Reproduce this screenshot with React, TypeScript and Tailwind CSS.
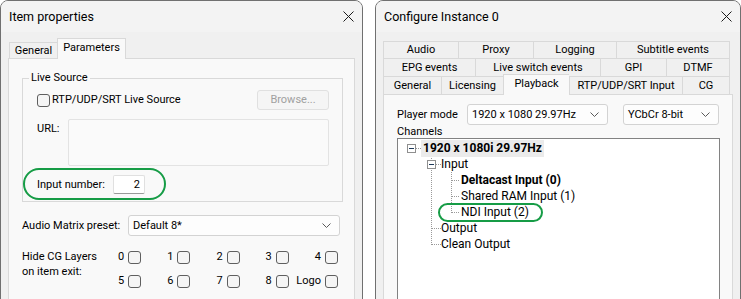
import React from 'react'

function CheckBox() {
  return <span className="inline-block w-[13px] h-[13px] rounded-[3px] border border-[#5f5f5f] bg-[#f5f5f5] shrink-0" />
}

function Chevron() {
  return (
    <svg width="9" height="5" viewBox="0 0 9 5" className="shrink-0">
      <path d="M0.5 0.5 L4.5 4.5 L8.5 0.5" fill="none" stroke="#5a5a5a" strokeWidth="1" />
    </svg>
  )
}

function CloseX() {
  return (
    <svg width="11" height="11" viewBox="0 0 11 11">
      <path d="M0.5 0.5 L10.5 10.5 M10.5 0.5 L0.5 10.5" stroke="#1b1b1b" strokeWidth="1" />
    </svg>
  )
}

function Select({ value, width }: { value: string; width: string }) {
  return (
    <div className={`${width} h-[21px] flex items-center justify-between pl-[4px] pr-[8px] bg-[#fdfdfd] border border-[#d3d3d3] rounded-[3px]`}>
      <span>{value}</span>
      <Chevron />
    </div>
  )
}

function TitleBar({ title }: { title: string }) {
  return (
    <div className="h-[31px] flex items-center justify-between pl-[8px] pr-[8px] bg-[#f3f3f3] rounded-t-[7px] text-[12.5px]">
      <span>{title}</span>
      <CloseX />
    </div>
  )
}

const layers = ['0', '1', '2', '3', '4', '5', '6', '7', '8', 'Logo']

function ItemProperties() {
  return (
    <div className="w-[363px] h-[320px] shrink-0 border border-[#707070] rounded-t-[8px] bg-[#f0f0f0] flex flex-col">
      <TitleBar title="Item properties" />
      <div className="flex-1 pt-[6px] px-[7px] flex flex-col">
        <div className="h-[20px] flex items-end pl-[1px]">
          <div className="w-[48px] h-[16px] border-t border-l border-[#d9d9d9] flex items-center justify-center">General</div>
          <div className="w-[69px] h-[21px] -mb-px relative z-10 border-t border-l border-r border-[#d9d9d9] bg-[#f9f9f9] flex items-start justify-center pt-[1px]">Parameters</div>
        </div>
        <div className="flex-1 border border-[#d9d9d9] bg-[#f9f9f9] pl-[13px]">
          <fieldset className="mt-[11px] w-[319px] border border-[#d9d9d9] pl-[14px] pr-[13px] pt-[4px] pb-[7px]">
            <legend className="-ml-[8px] px-[2px] leading-[16px]">Live Source</legend>
            <div className="h-[20px] flex items-center justify-between">
              <label className="flex items-center gap-[2px]">
                <CheckBox />
                <span>RTP/UDP/SRT Live Source</span>
              </label>
              <div className="w-[72px] h-[20px] border border-[#e0e0e0] rounded-[3px] bg-[#f5f5f5] text-[#a0a0a0] flex items-center justify-center">Browse...</div>
            </div>
            <div className="mt-[9px] flex">
              <span className="w-[31px] pt-[2px]">URL:</span>
              <div className="w-[261px] h-[47px] border border-[#e3e3e3] rounded-[2px] bg-[#fafafa]" />
            </div>
            <div className="mt-[9px] h-[19px] flex items-center">
              <span className="w-[76px]">Input number:</span>
              <div className="w-[32px] h-[19px] border border-[#e0e0e0] border-b-[#9a9a9a] rounded-[2px] bg-white flex items-center justify-end pr-[4px]">2</div>
            </div>
          </fieldset>
          <div className="mt-[13px] flex items-center">
            <span className="w-[106px]">Audio Matrix preset:</span>
            <Select value="Default 8*" width="w-[212px]" />
          </div>
          <div className="mt-[9px] flex">
            <div className="w-[70px] pt-[4px] leading-[15px]">
              Hide CG Layers
              <br />
              on item exit:
            </div>
            <div className="w-[246px] grid grid-cols-5">
              {layers.map((l) => (
                <div key={l} className="h-[24px] flex items-center justify-end gap-[4px]">
                  <span>{l}</span>
                  <CheckBox />
                </div>
              ))}
            </div>
          </div>
        </div>
      </div>
    </div>
  )
}

const tabRows = [
  [['Audio', 75], ['Proxy', 75], ['Logging', 83], ['Subtitle events', 114]],
  [['EPG events', 92], ['Live switch events', 125], ['GPI', 66], ['DTMF', 64]],
] as const

const row3 = [
  ['General', 58],
  ['Licensing', 62],
  ['Playback', 66],
  ['RTP/UDP/SRT Input', 113],
  ['CG', 48],
] as const

function TreeLines() {
  const dot = { stroke: '#9a9a9a', strokeWidth: 1, strokeDasharray: '1 1' }
  return (
    <svg className="absolute left-0 top-0" width="200" height="120" viewBox="0 0 200 120">
      {/* root */}
      <line x1="18" y1="9.5" x2="23" y2="9.5" {...dot} />
      <line x1="33.5" y1="17" x2="33.5" y2="21" {...dot} />
      <line x1="33.5" y1="31" x2="33.5" y2="106" {...dot} />
      <line x1="38" y1="25.5" x2="43" y2="25.5" {...dot} />
      <line x1="34" y1="89.5" x2="43" y2="89.5" {...dot} />
      <line x1="34" y1="105.5" x2="43" y2="105.5" {...dot} />
      {/* input children */}
      <line x1="53.5" y1="33" x2="53.5" y2="74" {...dot} />
      <line x1="54" y1="41.5" x2="62" y2="41.5" {...dot} />
      <line x1="54" y1="57.5" x2="62" y2="57.5" {...dot} />
      <line x1="54" y1="73.5" x2="62" y2="73.5" {...dot} />
      {/* expand boxes */}
      <rect x="9.5" y="5.5" width="8" height="8" fill="#fff" stroke="#8f8f8f" />
      <line x1="11" y1="9.5" x2="16" y2="9.5" stroke="#1e3a5a" />
      <rect x="29.5" y="21.5" width="8" height="8" fill="#fff" stroke="#8f8f8f" />
      <line x1="31" y1="25.5" x2="36" y2="25.5" stroke="#1e3a5a" />
    </svg>
  )
}

function ConfigureInstance() {
  return (
    <div className="w-[366px] h-[320px] shrink-0 border border-[#707070] rounded-t-[8px] bg-[#f0f0f0] flex flex-col">
      <TitleBar title="Configure Instance 0" />
      <div className="flex-1 pt-[9px] px-[7px] flex flex-col">
        {tabRows.map((row, i) => (
          <div key={i} className={`flex ${i === 0 ? 'h-[17px]' : 'h-[18px]'}`}>
            {row.map(([name, w], j) => (
              <div
                key={name}
                style={{ width: w }}
                className={`border-t border-l border-[#d9d9d9] flex items-center justify-center ${j === row.length - 1 ? 'border-r' : ''}`}
              >
                {name}
              </div>
            ))}
          </div>
        ))}
        <div className="flex h-[18px] items-end">
          {row3.map(([name, w], j) =>
            name === 'Playback' ? (
              <div
                key={name}
                style={{ width: w }}
                className="h-[21px] -mb-px relative z-10 border-t border-l border-[#d9d9d9] bg-[#f9f9f9] flex items-center justify-center pb-[2px]"
              >
                {name}
              </div>
            ) : (
              <div
                key={name}
                style={{ width: w }}
                className={`h-[18px] border-t border-l border-[#d9d9d9] flex items-center justify-center ${j === row3.length - 1 ? 'border-r' : ''}`}
              >
                {name}
              </div>
            ),
          )}
        </div>
        <div className="flex-1 border border-[#d9d9d9] bg-[#f9f9f9] pl-[13px] pt-[9px]">
          <div className="flex items-center">
            <span className="w-[70px]">Player mode</span>
            <Select value="1920 x 1080 29.97Hz" width="w-[141px]" />
            <div className="ml-[15px]">
              <Select value="YCbCr 8-bit" width="w-[96px]" />
            </div>
          </div>
          <div className="leading-[13px]">Channels</div>
          <div className="w-[323px] h-[180px] border border-[#828282] bg-white relative pt-[1px] text-[12px]">
            <TreeLines />
            <div className="relative">
              <div className="h-[16px] flex items-center pl-[23px]">
                <span className="bg-[#ebebeb] px-[2px] h-[17px] leading-[17px] font-bold">1920 x 1080i 29.97Hz</span>
              </div>
              <div className="h-[16px] flex items-center pl-[43px]">Input</div>
              <div className="h-[16px] flex items-center pl-[63px] font-bold">Deltacast Input (0)</div>
              <div className="h-[16px] flex items-center pl-[63px]">Shared RAM Input (1)</div>
              <div className="h-[16px] flex items-center pl-[63px]">NDI Input (2)</div>
              <div className="h-[16px] flex items-center pl-[43px]">Output</div>
              <div className="h-[16px] flex items-center pl-[43px]">Clean Output</div>
            </div>
          </div>
        </div>
      </div>
    </div>
  )
}

export default function App() {
  return (
    <div className="relative w-[741px] h-[299px] overflow-hidden bg-white flex gap-[12px] font-['Roboto',sans-serif] text-[11px] leading-[16px] text-black whitespace-nowrap">
      <ItemProperties />
      <ConfigureInstance />
      <div className="absolute left-[23px] top-[168px] w-[143px] h-[32px] rounded-full border-[2.5px] border-[#169c46] pointer-events-none" />
      <div className="absolute left-[438px] top-[203px] w-[105px] h-[19px] rounded-full border-[2.5px] border-[#169c46] pointer-events-none" />
    </div>
  )
}
